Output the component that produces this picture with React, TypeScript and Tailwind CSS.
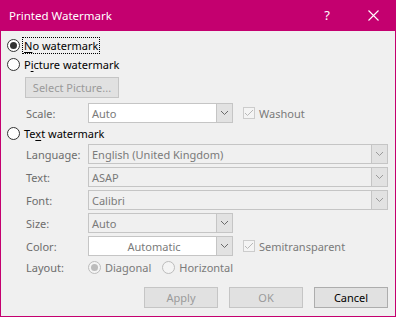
import React from 'react'

const font = { fontFamily: '"Noto Sans", "Open Sans", sans-serif' }

const Chevron = ({ color = '#606060' }: { color?: string }) => (
  <svg width="9" height="6" viewBox="0 0 9 6">
    <polyline points="1,1 4.5,4.5 8,1" fill="none" stroke={color} strokeWidth="1" />
  </svg>
)

const Radio = ({ checked = false, disabled = false }: { checked?: boolean; disabled?: boolean }) => (
  <span
    className={`w-[13px] h-[13px] rounded-full border flex items-center justify-center shrink-0 ${
      disabled ? 'border-[#bcbcbc] bg-[#f4f4f4]' : 'border-[#333333] bg-white'
    }`}
  >
    {checked && <span className={`w-[7px] h-[7px] rounded-full ${disabled ? 'bg-[#bcbcbc]' : 'bg-[#333333]'}`} />}
  </span>
)

const Check = () => (
  <span className="w-[12px] h-[12px] border border-[#cccccc] bg-[#f4f4f4] flex items-center justify-center shrink-0">
    <svg width="10" height="8" viewBox="0 0 10 8">
      <polyline points="1,4 3.5,6.5 9,1" fill="none" stroke="#b8b8b8" strokeWidth="1" />
    </svg>
  </span>
)

interface SelectProps {
  value: string
  wide?: boolean
  white?: boolean
  center?: boolean
}

const Select = ({ value, wide, white, center }: SelectProps) => (
  <div className={`h-[20px] flex border border-[#c5c5c5] ${wide ? 'w-[300px]' : 'w-[145px]'}`}>
    <div
      className={`flex-1 flex items-center pl-[3px] text-[#7a7a7a] ${white ? 'bg-white' : 'bg-[#f0f0f0]'} ${
        center ? 'justify-center pl-0' : ''
      }`}
    >
      {value}
    </div>
    <div className="w-[16px] bg-[#e2e2e2] border-l border-[#c5c5c5] flex items-center justify-center">
      <Chevron color={wide ? '#9a9a9a' : '#6a6a6a'} />
    </div>
  </div>
)

const Label = ({ children }: { children: React.ReactNode }) => (
  <div className="w-[62px] text-[#6d6d6d]">{children}</div>
)

export default function App() {
  return (
    <div className="w-[396px] h-[317px] bg-[#c4006f] flex flex-col text-[11px] leading-none" style={font}>
      <div className="h-[31px] flex items-center text-white text-[11.5px]">
        <div className="pl-[9px] flex-1">Printed Watermark</div>
        <div className="w-[46px] text-center text-[13px]">?</div>
        <div className="w-[46px] flex justify-center">
          <svg width="11" height="11" viewBox="0 0 11 11">
            <path d="M0.5 0.5 L10.5 10.5 M10.5 0.5 L0.5 10.5" stroke="#ffffff" strokeWidth="1.1" />
          </svg>
        </div>
      </div>
      <div className="flex-1 mx-[1px] mb-[1px] bg-[#f0f0f0] pt-[6px] flex flex-col">
        <div className="h-[17px] flex items-center pl-[6px]">
          <Radio checked />
          <span className="ml-[2px] px-[1px] h-[17px] flex items-center border border-dotted border-black">
            <span className="underline underline-offset-2">N</span>o watermark
          </span>
        </div>
        <div className="mt-[2px] h-[17px] flex items-center pl-[6px]">
          <Radio />
          <span className="ml-[4px]">
            P<span className="underline underline-offset-2">i</span>cture watermark
          </span>
        </div>
        <div className="mt-[4px] pl-[24px]">
          <div className="w-[94px] h-[21px] bg-[#e1e1e1] border border-[#c5c5c5] flex items-center justify-center text-[#9a9a9a]">
            Select Picture...
          </div>
        </div>
        <div className="mt-[5px] h-[20px] flex items-center pl-[25px]">
          <Label>Scale:</Label>
          <Select value="Auto" white />
          <div className="ml-[10px] flex items-center">
            <Check />
            <span className="ml-[4px] text-[#7a7a7a]">Washout</span>
          </div>
        </div>
        <div className="mt-[2px] h-[17px] flex items-center pl-[6px]">
          <Radio />
          <span className="ml-[4px]">
            Te<span className="underline underline-offset-2">x</span>t watermark
          </span>
        </div>
        <div className="mt-[2px] flex flex-col gap-[3px] pl-[25px]">
          <div className="flex items-center">
            <Label>Language:</Label>
            <Select value="English (United Kingdom)" wide />
          </div>
          <div className="flex items-center">
            <Label>Text:</Label>
            <Select value="ASAP" wide />
          </div>
          <div className="flex items-center">
            <Label>Font:</Label>
            <Select value="Calibri" wide />
          </div>
          <div className="flex items-center">
            <Label>Size:</Label>
            <Select value="Auto" />
          </div>
          <div className="flex items-center">
            <Label>Color:</Label>
            <Select value="Automatic" white center />
            <div className="ml-[10px] flex items-center">
              <Check />
              <span className="ml-[4px] text-[#7a7a7a]">Semitransparent</span>
            </div>
          </div>
        </div>
        <div className="mt-[2px] h-[18px] flex items-center pl-[25px]">
          <Label>Layout:</Label>
          <Radio checked disabled />
          <span className="ml-[4px] text-[#7a7a7a]">Diagonal</span>
          <span className="ml-[11px]">
            <Radio disabled />
          </span>
          <span className="ml-[4px] text-[#7a7a7a]">Horizontal</span>
        </div>
        <div className="mt-[11px] flex justify-end gap-[11px] pr-[7px]">
          <div className="w-[74px] h-[21px] bg-[#e1e1e1] border border-[#c5c5c5] flex items-center justify-center text-[#9a9a9a]">
            Apply
          </div>
          <div className="w-[74px] h-[21px] bg-[#e1e1e1] border border-[#c5c5c5] flex items-center justify-center text-[#9a9a9a]">
            OK
          </div>
          <div className="w-[74px] h-[21px] bg-[#e1e1e1] border border-[#adadad] flex items-center justify-center text-black">
            Cancel
          </div>
        </div>
      </div>
    </div>
  )
}
